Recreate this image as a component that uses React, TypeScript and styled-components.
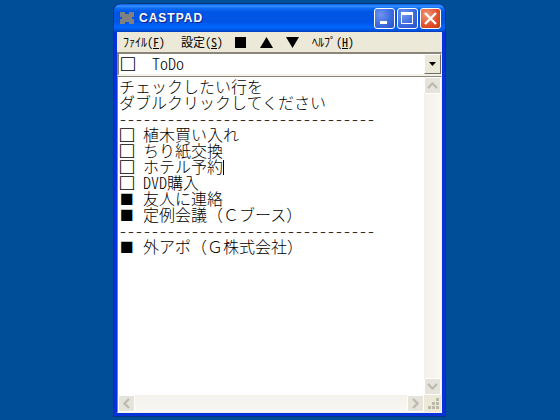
import React from "react";
import styled, { createGlobalStyle } from "styled-components";

const jp = `"Noto Sans CJK JP", "Liberation Sans", sans-serif`;

const App: React.FC = () => {
  const lines: { on: boolean; text: React.ReactNode; key: string }[] = [
    { key: "a", on: false, text: "植木買い入れ" },
    { key: "b", on: false, text: "ちり紙交換" },
    {
      key: "c",
      on: false,
      text: (
        <>
          ホテル予約
          <Caret />
        </>
      ),
    },
    {
      key: "d",
      on: false,
      text: (
        <>
          <Half>DVD</Half>購入
        </>
      ),
    },
    { key: "e", on: true, text: "友人に連絡" },
    { key: "f", on: true, text: "定例会議（Ｃブース）" },
  ];

  return (
    <>
      <Global />
      <Desktop>
        <Window>
          <TitleBar>
            <AppIcon width="14" height="12" viewBox="0 0 14 12">
              <path
                d="M0 0h5v2h4V0h5v5h-2v2h2v5H9v-2H5v2H0V7h2V5H0z"
                fill="#808080"
              />
            </AppIcon>
            <TitleText>CASTPAD</TitleText>
            <Caption>
              <CapButton>
                <svg width="21" height="21" viewBox="0 0 21 21">
                  <rect x="6" y="13" width="7" height="3" fill="#fff" />
                </svg>
              </CapButton>
              <CapButton>
                <svg width="21" height="21" viewBox="0 0 21 21">
                  <path
                    d="M4 4h12v12H4z M5 7v8h10V7z"
                    fill="#fff"
                    fillRule="evenodd"
                  />
                </svg>
              </CapButton>
              <CapButton $close>
                <svg width="21" height="21" viewBox="0 0 21 21">
                  <path
                    d="M5 5l11 11M16 5L5 16"
                    stroke="#fff"
                    strokeWidth="2.4"
                  />
                </svg>
              </CapButton>
            </Caption>
          </TitleBar>
          <Body>
            <MenuBar>
              <MenuItem $w={58}>
                ﾌｧｲﾙ(<u>F</u>)
              </MenuItem>
              <MenuItem $w={54}>
                設定(<u>S</u>)
              </MenuItem>
              <ToolGlyph width="11" height="11" viewBox="0 0 11 11" $gap={14}>
                <rect width="11" height="11" />
              </ToolGlyph>
              <ToolGlyph width="13" height="11" viewBox="0 0 13 11" $gap={13}>
                <path d="M6.5 0L13 11H0z" />
              </ToolGlyph>
              <ToolGlyph width="13" height="11" viewBox="0 0 13 11" $gap={13}>
                <path d="M0 0h13L6.5 11z" />
              </ToolGlyph>
              <MenuItem $w={50}>
                ﾍﾙﾌﾟ(<u>H</u>)
              </MenuItem>
            </MenuBar>
            <Combo>
              <ComboValue>
                <Mark>□</Mark>
                <ComboText>ToDo</ComboText>
              </ComboValue>
              <ComboButton>
                <svg width="7" height="4" viewBox="0 0 7 4">
                  <path d="M0 0h7L3.5 4z" fill="#000" />
                </svg>
              </ComboButton>
            </Combo>
            <Editor>
              <Main>
                <Sheet>
                  <Line>チェックしたい行を</Line>
                  <Line>ダブルクリックしてください</Line>
                  <Line>
                    <Half>--------------------------------</Half>
                  </Line>
                  {lines.map((l) => (
                    <Line key={l.key}>
                      <Mark>{l.on ? "■" : "□"}</Mark>
                      {l.text}
                    </Line>
                  ))}
                  <Line>
                    <Half>--------------------------------</Half>
                  </Line>
                  <Line>
                    <Mark>■</Mark>外アポ（Ｇ株式会社）
                  </Line>
                </Sheet>
                <VScroll>
                  <ScrollBtn>
                    <Chevron viewBox="0 0 11 7">
                      <path d="M1 6l4.5-4.5L10 6" />
                    </Chevron>
                  </ScrollBtn>
                  <ScrollBtn>
                    <Chevron viewBox="0 0 11 7">
                      <path d="M1 1l4.5 4.5L10 1" />
                    </Chevron>
                  </ScrollBtn>
                </VScroll>
              </Main>
              <BottomRow>
                <HScroll>
                  <ScrollBtn>
                    <SideChevron viewBox="0 0 7 11">
                      <path d="M6 1L1.5 5.5 6 10" />
                    </SideChevron>
                  </ScrollBtn>
                  <ScrollBtn>
                    <SideChevron viewBox="0 0 7 11">
                      <path d="M1 1l4.5 4.5L1 10" />
                    </SideChevron>
                  </ScrollBtn>
                </HScroll>
                <Grip>
                  <svg width="12" height="12" viewBox="0 0 12 12">
                    <path
                      d="M8 0h3v3H8zM4 4h3v3H4zM8 4h3v3H8zM0 8h3v3H0zM4 8h3v3H4zM8 8h3v3H8z"
                      fill="#bdb9a8"
                    />
                  </svg>
                </Grip>
              </BottomRow>
            </Editor>
          </Body>
        </Window>
      </Desktop>
    </>
  );
};

export default App;

const Global = createGlobalStyle`
  html, body {
    margin: 0;
    padding: 0;
    background: #004e98;
  }
`;

const Desktop = styled.div`
  width: 560px;
  height: 420px;
  overflow: hidden;
  padding: 4px 0 0 114px;
  box-sizing: border-box;
  background: #004e98;
`;

const Window = styled.div`
  width: 331px;
  height: 412px;
  display: flex;
  flex-direction: column;
  background: #0831d9;
  border-radius: 7px 7px 0 0;
  box-shadow: 0 0 0 1px #003c7c;
`;

const TitleBar = styled.div`
  height: 28px;
  flex: none;
  display: flex;
  align-items: center;
  padding: 0 3px 0 6px;
  border-radius: 7px 7px 0 0;
  background: linear-gradient(
    to bottom,
    #0058e6 0,
    #3a93ff 2px,
    #0f6ef5 4px,
    #0055e5 8px,
    #0055e5 18px,
    #0066ff 23px,
    #0056e0 26px,
    #003dc0 28px
  );
`;

const AppIcon = styled.svg`
  flex: none;
  margin-right: 5px;
`;

const TitleText = styled.div`
  flex: 1;
  color: #fff;
  font: bold 12px "Liberation Sans", sans-serif;
  letter-spacing: 1px;
  text-shadow: 1px 1px 0 #0f1f8a;
`;

const Caption = styled.div`
  display: flex;
  gap: 2px;
  padding-right: 1px;
`;

const CapButton = styled.div<{ $close?: boolean }>`
  width: 21px;
  height: 21px;
  box-sizing: border-box;
  border: 1px solid #fff;
  border-radius: 3px;
  overflow: hidden;
  background: ${(p) =>
    p.$close
      ? "radial-gradient(circle at 30% 30%, #f09a7c, #e2522c 55%, #c73a12)"
      : "radial-gradient(circle at 30% 30%, #6f94ee, #3c6be0 55%, #2a50c8)"};

  svg {
    display: block;
    margin: -1px;
  }
`;

const Body = styled.div`
  flex: 1;
  min-height: 0;
  margin: 0 3px 3px;
  display: flex;
  flex-direction: column;
  background: #ece9d8;
`;

const MenuBar = styled.div`
  height: 20px;
  flex: none;
  display: flex;
  align-items: center;
  padding-left: 6px;
  font: 12px/20px ${jp};
  font-feature-settings: "hwid" 1;
  color: #000;
`;

const MenuItem = styled.div<{ $w: number }>`
  width: ${(p) => p.$w}px;
  white-space: nowrap;
`;

const ToolGlyph = styled.svg<{ $gap: number }>`
  flex: none;
  margin-right: ${(p) => p.$gap}px;
  fill: #000;
`;

const Combo = styled.div`
  height: 24px;
  flex: none;
  display: flex;
  box-sizing: border-box;
  border: 2px solid;
  border-right-width: 1px;
  border-color: #8a867a #f4f2e8 #f4f2e8 #8a867a;
  background: #fff;
`;

const ComboValue = styled.div`
  flex: 1;
  padding-left: 1px;
  font: 300 16px/18px ${jp};
  font-feature-settings: "hwid" 1;
`;

const ComboText = styled.span`
  margin-left: 8px;
`;

const ComboButton = styled.div`
  width: 17px;
  display: flex;
  align-items: center;
  justify-content: center;
  box-sizing: border-box;
  background: #ece9d8;
  border: 1px solid;
  border-color: #fff #716f64 #716f64 #fff;
`;

const Editor = styled.div`
  flex: 1;
  min-height: 0;
  display: flex;
  flex-direction: column;
  box-sizing: border-box;
  border: 1px solid;
  border-color: #8a867a #f4f2e8 #f4f2e8 #8a867a;
  background: #fff;
`;

const Main = styled.div`
  flex: 1;
  min-height: 0;
  display: flex;
`;

const Sheet = styled.div`
  flex: 1;
  padding: 1px 0 0 1px;
  font: 300 16px/16px ${jp};
  color: #000;
  white-space: pre;
`;

const Line = styled.div`
  height: 16px;
`;

const Half = styled.span`
  font-feature-settings: "hwid" 1;
`;

const Mark = styled.span`
  display: inline-block;
  box-sizing: border-box;
  width: 24px;
  padding-left: 1px;
  font-family: "DejaVu Sans", sans-serif;
  font-size: 23px;
  line-height: 16px;
  vertical-align: -1px;
`;

const Caret = styled.span`
  display: inline-block;
  width: 1px;
  height: 15px;
  vertical-align: -2px;
  background: #000;
`;

const VScroll = styled.div`
  width: 17px;
  flex: none;
  display: flex;
  flex-direction: column;
  justify-content: space-between;
  background: linear-gradient(to right, #f3f1ea, #f9f8f4);
`;

const ScrollBtn = styled.div`
  width: 17px;
  height: 17px;
  box-sizing: border-box;
  display: flex;
  align-items: center;
  justify-content: center;
  border: 1px solid #fff;
  border-radius: 2px;
  background: #e6e4da;
`;

const Chevron = styled.svg`
  width: 11px;
  height: 7px;
  fill: none;
  stroke: #bdbab0;
  stroke-width: 2.4;
`;

const SideChevron = styled.svg`
  width: 7px;
  height: 11px;
  fill: none;
  stroke: #bdbab0;
  stroke-width: 2.4;
`;

const BottomRow = styled.div`
  height: 17px;
  flex: none;
  display: flex;
`;

const HScroll = styled.div`
  flex: 1;
  display: flex;
  justify-content: space-between;
  background: linear-gradient(to bottom, #f3f1ea, #f9f8f4);
`;

const Grip = styled.div`
  width: 17px;
  display: flex;
  align-items: flex-end;
  justify-content: flex-end;
  background: #ece9d8;
  padding: 0 1px 2px 0;
  box-sizing: border-box;
`;
